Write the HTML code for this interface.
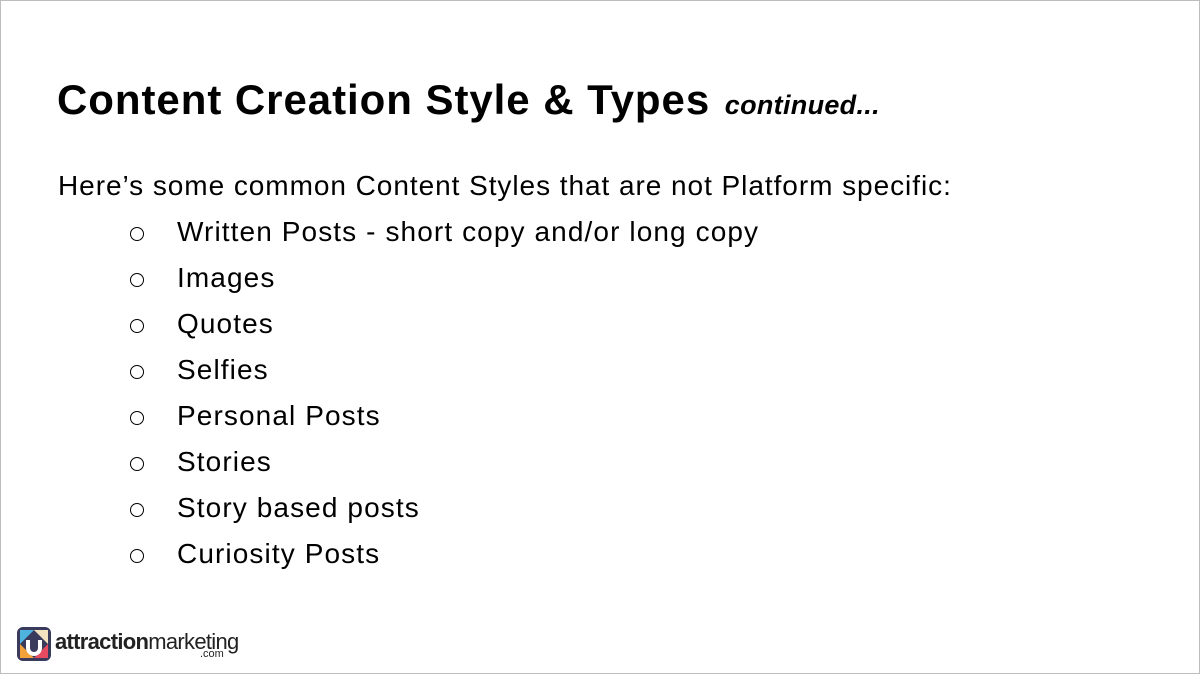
<!DOCTYPE html>
<html><head><style>
body{margin:0;width:1200px;height:674px;background:#fff;position:relative;overflow:hidden;font-family:"Liberation Sans",sans-serif;}
.frame{position:absolute;left:0;top:0;width:1198px;height:672px;border:1px solid #bdbdbd;}
h1{position:absolute;left:57px;top:76px;margin:0;font-size:42px;font-weight:bold;color:#000;white-space:nowrap;letter-spacing:0.95px}
h1 i{font-size:27px;margin-left:2px;letter-spacing:0.3px}
.p{position:absolute;left:58px;top:170px;font-size:28px;letter-spacing:0.95px;white-space:nowrap;color:#000}
.li{position:absolute;left:177px;font-size:28px;letter-spacing:1.1px;white-space:nowrap;color:#000}
.b{position:absolute;left:130px;width:12px;height:12px;border:1.5px solid #000;border-radius:50%}
.logo{position:absolute;left:16px;top:626px}
</style></head><body>
<div class="frame"></div>
<h1>Content Creation Style &amp; Types <i>continued...</i></h1>
<div class="p">Here’s some common Content Styles that are not Platform specific:</div>
<div class="b" style="top:227px"></div><div class="li" style="top:216px">Written Posts - short copy and/or long copy</div>
<div class="b" style="top:273px"></div><div class="li" style="top:262px">Images</div>
<div class="b" style="top:319px"></div><div class="li" style="top:308px">Quotes</div>
<div class="b" style="top:365px"></div><div class="li" style="top:354px">Selfies</div>
<div class="b" style="top:411px"></div><div class="li" style="top:400px">Personal Posts</div>
<div class="b" style="top:457px"></div><div class="li" style="top:446px">Stories</div>
<div class="b" style="top:503px"></div><div class="li" style="top:492px">Story based posts</div>
<div class="b" style="top:549px"></div><div class="li" style="top:538px">Curiosity Posts</div>
<div class="logo">
<svg width="36" height="36" viewBox="0 0 36 36">
<rect x="1" y="1" width="34" height="34" rx="6" fill="#3a3a5c"/>
<path d="M4 4h14L4 18z" fill="#4fb3e0"/><path d="M18 4h14v14z" fill="#f2e2c0"/>
<path d="M4 18v14h14z" fill="#f2a23a"/><path d="M32 18v14H18z" fill="#e84a5f"/>
<path d="M12 14v8a6 6 0 0 0 12 0v-8" stroke="#fff" stroke-width="4" fill="none"/>
</svg>
<span style="position:absolute;left:39px;top:3px;font-size:22px;font-weight:bold;color:#222;letter-spacing:-0.7px;white-space:nowrap">attraction<span style="font-weight:normal">marketing</span></span>
<span style="position:absolute;left:184px;top:22px;font-size:11px;color:#222">.com</span>
</div>
</body></html>
